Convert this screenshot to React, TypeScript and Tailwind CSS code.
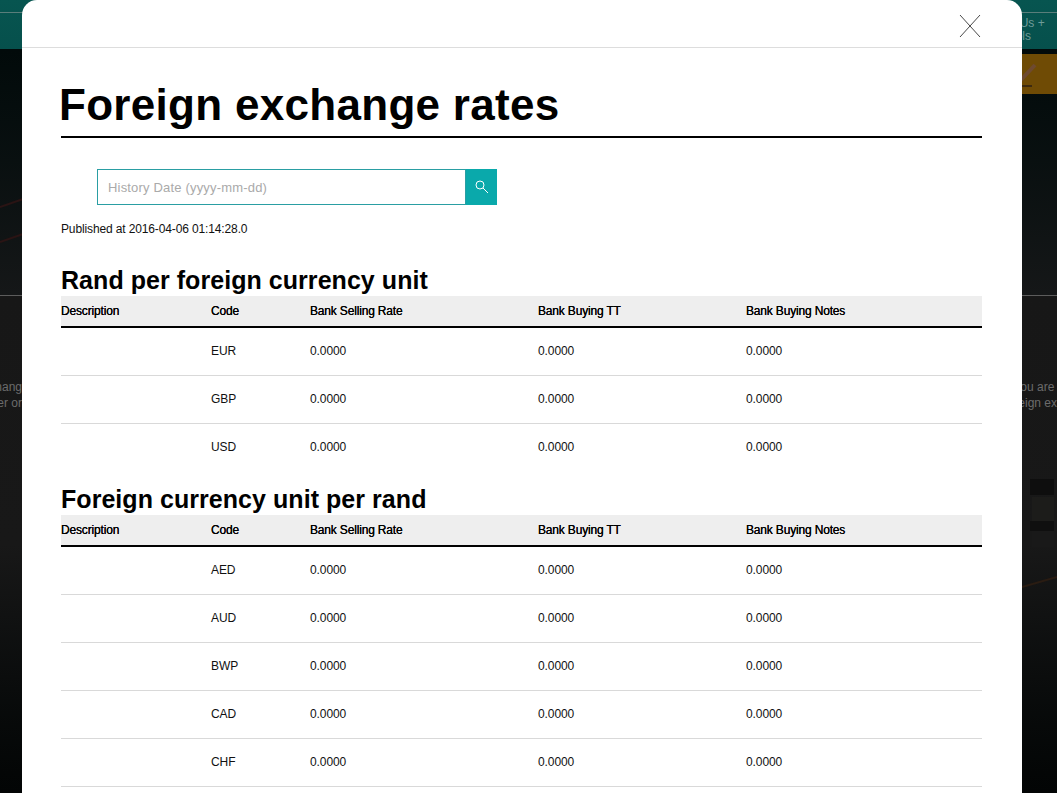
const firstRows = ["EUR", "GBP", "USD"];
const secondRows = ["AED", "AUD", "BWP", "CAD", "CHF"];

function RateTable({ title, codes, endRule }: { title: string; codes: string[]; endRule?: boolean }) {
  return (
    <section>
      <h2 className="h-[34px] pt-[3px] text-[25px] leading-[30px] font-bold tracking-[0.05px] text-black">{title}</h2>
      <div className="flex h-[32px] items-center border-b-2 border-black bg-[#eeeeee] pb-[1px] text-[12px] tracking-[-0.17px] text-black [text-shadow:0_0_0.3px_#000]">
        <div className="w-[150px]">Description</div>
        <div className="w-[99px]">Code</div>
        <div className="w-[228px]">Bank Selling Rate</div>
        <div className="w-[208px]">Bank Buying TT</div>
        <div>Bank Buying Notes</div>
      </div>
      <div className={endRule ? "" : "[&>div:last-child]:border-b-0"}>
        {codes.map((code) => (
          <div key={code} className="flex h-[48px] items-center border-b border-[#d9d9d9] pb-[2px] text-[12px] tracking-[-0.1px] text-[#111111]">
            <div className="w-[150px]" />
            <div className="w-[99px]">{code}</div>
            <div className="w-[228px]">0.0000</div>
            <div className="w-[208px]">0.0000</div>
            <div>0.0000</div>
          </div>
        ))}
      </div>
    </section>
  );
}

export default function App() {
  return (
    <div className="relative flex h-[793px] w-full flex-col overflow-hidden bg-[#0d0f0f] font-['Liberation_Sans',Arial,sans-serif]">
      {/* Dimmed page behind the dialog */}
      <header className="h-[49px] bg-gradient-to-b from-[#075550] to-[#06504c] pt-[12px]">
        <div className="h-px bg-[#5a7e7b]" />
        <div className="flex justify-end pr-[14px] pt-[4px] text-[12px] leading-[13px] text-[#6f9c99]">
          <div className="w-[68px] whitespace-nowrap">
            <div>Contact Us +</div>
            <div className="pl-[28px]">Tools</div>
          </div>
        </div>
      </header>
      <div className="relative h-[246px] bg-gradient-to-b from-[#020a0a] to-[#151718] pt-[5px]">
        <div className="ml-auto flex h-[40px] w-[140px] items-center justify-end bg-[#6f4b05] pr-[19px]">
          <svg width="22" height="26" viewBox="0 0 22 26" fill="none">
            <path d="M3 21 L19 4" stroke="#6e4a30" strokeWidth="4" />
            <path d="M0 25 H16" stroke="#3d2a10" strokeWidth="2" />
          </svg>
        </div>
        <svg className="absolute bottom-[50px] left-0" width="30" height="50" viewBox="0 0 30 50" fill="none" stroke="#2a1414" strokeWidth="2">
          <path d="M0 12 L26 3" />
          <path d="M0 47 L26 38" />
        </svg>
      </div>
      <div className="h-px bg-[#5c5c5c]" />
      <div className="flex flex-1 flex-col bg-gradient-to-b from-[#171717] via-[#181818] to-[#030505]">
        <div className="flex justify-between pt-[83px] text-[12px] leading-[16px] text-[#6b6b6b]">
          <div className="w-[22px] overflow-hidden whitespace-nowrap" dir="rtl">
            <div>hang</div>
            <div>er or</div>
          </div>
          <div>
            <div>you are</div>
            <div>reign ex</div>
          </div>
        </div>
        <svg className="ml-auto mt-[68px]" width="35" height="110" viewBox="0 0 35 110" fill="none">
          <rect x="8" y="0" width="24" height="16" fill="#0e0e0e" />
          <rect x="10" y="18" width="22" height="24" fill="#1c1c1a" />
          <rect x="8" y="42" width="24" height="10" fill="#0f0f0f" />
          <rect x="10" y="52" width="22" height="16" fill="#191919" />
          <path d="M0 108 L35 98" stroke="#2a1c12" strokeWidth="2" />
        </svg>
      </div>

      {/* Dialog */}
      <div className="absolute left-[22px] top-0 w-[1000px] rounded-t-[15px] bg-white pb-[40px]">
        <div className="relative h-[48px] border-b border-[#dddddd]">
          <svg className="absolute left-[937px] top-[14px]" width="22" height="24" viewBox="0 0 22 24" fill="none" stroke="#333333" strokeWidth="0.9">
            <path d="M1 1 L21 23" />
            <path d="M21 1 L1 23" />
          </svg>
        </div>
        <div className="pl-[39px] pr-[40px]">
          <h1 className="-ml-[2px] h-[88px] pt-[26px] text-[44px] leading-[62px] font-bold tracking-[0.3px] text-black">Foreign exchange rates</h1>
          <div className="border-t-2 border-black pl-[36px] pt-[31px]">
            <div className="flex h-[36px] w-[400px]">
              <input
                readOnly
                placeholder="History Date (yyyy-mm-dd)"
                className="h-full min-w-0 flex-1 border border-[#2a9ea3] pl-[10px] text-[13px] tracking-[0.18px] outline-none placeholder:text-[#aaaaaa]"
              />
              <button className="flex w-[31px] shrink-0 items-center justify-center bg-[#0aa9ab]">
                <svg width="14" height="14" viewBox="0 0 14 14" fill="none" stroke="white" strokeWidth="1">
                  <circle cx="5" cy="5" r="4" />
                  <path d="M8 8 L13 13" />
                </svg>
              </button>
            </div>
          </div>
          <p className="mt-[17px] h-[16px] text-[12px] leading-[14px] tracking-[-0.13px] text-[#111111]">Published at 2016-04-06 01:14:28.0</p>
          <div className="pt-[24px]">
            <RateTable title="Rand per foreign currency unit" codes={firstRows} />
          </div>
          <div className="pt-[9px]">
            <RateTable title="Foreign currency unit per rand" codes={secondRows} endRule />
          </div>
        </div>
      </div>
    </div>
  );
}
